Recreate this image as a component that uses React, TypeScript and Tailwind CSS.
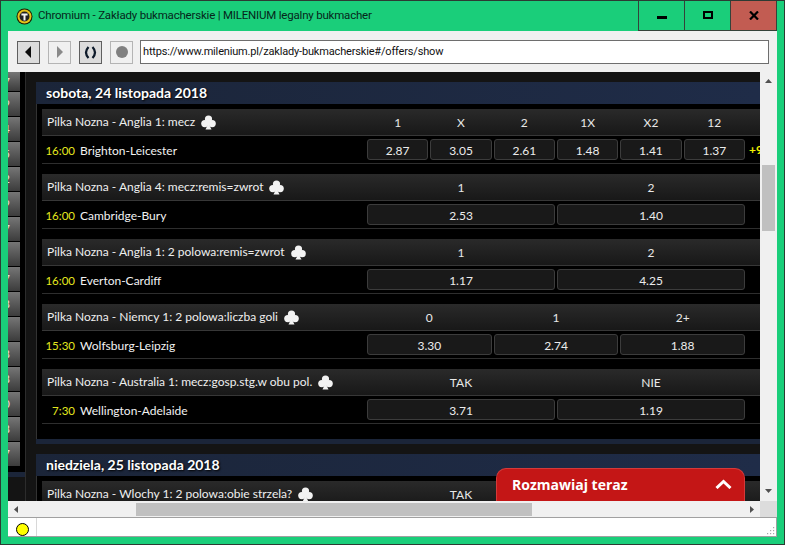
import React from "react";

const FUT = "font-['Lato','Open_Sans',sans-serif]";

function Club() {
  return (
    <svg width="15" height="15" viewBox="0 0 15 15" className="shrink-0" fill="#f2f2f2">
      <circle cx="7.5" cy="4" r="3.6" />
      <circle cx="3.8" cy="8.6" r="3.6" />
      <circle cx="11.2" cy="8.6" r="3.6" />
      <path d="M6.7 7 H8.3 Q8.3 12 10.5 14.5 H4.5 Q6.7 12 6.7 7 Z" />
    </svg>
  );
}

function Odd({ v }: { v: string }) {
  return (
    <div className="flex-1 min-w-0 h-[21px] pt-[2px] flex items-center justify-center rounded-[3px] border border-[#3c3c3c] bg-[#191919] text-[12px] text-[#ececec]">
      {v}
    </div>
  );
}

type G = { title: string; time: string; teams: string; cols: string[]; odds: string[]; more?: boolean };

function Group({ g }: { g: G }) {
  return (
    <div className="mb-[10px] w-[760px]">
      <div className="h-[27px] flex items-center border-b border-[#373737] bg-gradient-to-b from-[#2a2a2a] to-[#181818]">
        <div className="w-[325px] shrink-0 pl-[5px] flex items-center gap-[6px] text-[12px] text-[#efefef] whitespace-nowrap">
          <span>{g.title}</span>
          <Club />
        </div>
        <div className="w-[378px] shrink-0 pt-[1px] flex gap-[2px] text-[12px] text-[#e8e8e8]">
          {g.cols.map((c, i) => (
            <div key={i} className="flex-1 min-w-0 text-center">{c}</div>
          ))}
        </div>
      </div>
      <div className="h-[28px] flex items-center border-b border-[#2e2e2e] bg-black">
        <div className="w-[325px] shrink-0 pt-[2px] flex items-center whitespace-nowrap">
          <span className="w-[33px] text-right text-[11.5px] text-[#e4e81e]">{g.time}</span>
          <span className="ml-[5px] text-[12px] text-[#f2f2f2]">{g.teams}</span>
        </div>
        <div className="w-[378px] shrink-0 flex gap-[2px]">
          {g.odds.map((o, i) => (
            <Odd key={i} v={o} />
          ))}
        </div>
        {g.more && <span className="ml-[4px] pt-[1px] text-[12px] font-bold text-[#f0f000] whitespace-nowrap">+97</span>}
      </div>
    </div>
  );
}

const groups: G[] = [
  { title: "Pilka Nozna - Anglia 1: mecz", time: "16:00", teams: "Brighton-Leicester", cols: ["1", "X", "2", "1X", "X2", "12"], odds: ["2.87", "3.05", "2.61", "1.48", "1.41", "1.37"], more: true },
  { title: "Pilka Nozna - Anglia 4: mecz:remis=zwrot", time: "16:00", teams: "Cambridge-Bury", cols: ["1", "2"], odds: ["2.53", "1.40"] },
  { title: "Pilka Nozna - Anglia 1: 2 polowa:remis=zwrot", time: "16:00", teams: "Everton-Cardiff", cols: ["1", "2"], odds: ["1.17", "4.25"] },
  { title: "Pilka Nozna - Niemcy 1: 2 polowa:liczba goli", time: "15:30", teams: "Wolfsburg-Leipzig", cols: ["0", "1", "2+"], odds: ["3.30", "2.74", "1.88"] },
  { title: "Pilka Nozna - Australia 1: mecz:gosp.stg.w obu pol.", time: "7:30", teams: "Wellington-Adelaide", cols: ["TAK", "NIE"], odds: ["3.71", "1.19"] },
];

const last: G = { title: "Pilka Nozna - Wlochy 1: 2 polowa:obie strzela?", time: "20:30", teams: "", cols: ["TAK", "NIE"], odds: ["1.80", "1.90"] };

const side = ["7", "9", "4", "5", "2", "9", "7", "", "7", "8", "", "8", "8", "0", "8", "7"];

function DateBar({ text }: { text: string }) {
  return (
    <div className="h-[22px] flex items-center pl-[10px] pb-[2px] bg-gradient-to-r from-[#1b2539] to-[#1f2c48] text-[14px] font-bold text-white [text-shadow:1px_1px_2px_#000] whitespace-nowrap">
      {text}
    </div>
  );
}

function NavBtn({ active, children }: { active?: boolean; children: React.ReactNode }) {
  return (
    <div className={active
      ? "w-[23px] h-[23px] flex items-center justify-center border border-[#5f5f5f] bg-[#dcdcdc]"
      : "w-[23px] h-[23px] flex items-center justify-center border border-[#b4b4b4] bg-[#f0f0f0]"}>
      {children}
    </div>
  );
}

export default function App() {
  return (
    <div className="w-[785px] h-[545px] flex flex-col overflow-hidden relative bg-[#1ace7a] border border-[#2d3a33] font-['Liberation_Sans',sans-serif]">
      {/* title bar */}
      <div className="h-[30px] shrink-0 flex items-stretch">
        <div className="flex-1 flex items-center pl-[15px] gap-[5px]">
          <svg width="17" height="17" viewBox="0 0 17 17">
            <circle cx="8.5" cy="8.5" r="8" fill="#1a1a00" />
            <circle cx="8.5" cy="8.5" r="7" fill="#e5c21a" />
            <circle cx="8.5" cy="8.5" r="5" fill="#222" />
            <path d="M5.4 5.4 H11.6 V7.4 H9.5 V12.6 H7.5 V7.4 H5.4 Z" fill="#f4f4f4" />
          </svg>
          <span className="text-[11.5px] tracking-[-0.2px] text-[#06261a] font-['Roboto',sans-serif] whitespace-nowrap">
            Chromium - Zakłady bukmacherskie | MILENIUM legalny bukmacher
          </span>
        </div>
        <div className="w-[47px] flex items-center justify-center border-x border-b border-[#34423a]">
          <div className="w-[10px] h-[3px] bg-black mt-[3px]" />
        </div>
        <div className="w-[46px] flex items-center justify-center border-r border-b border-[#34423a]">
          <div className="w-[10px] h-[8px] border-2 border-black mb-[2px]" />
        </div>
        <div className="w-[46px] flex items-center justify-center border-r border-b border-[#34423a] bg-[#c25c52]">
          <svg width="10" height="9" viewBox="0 0 10 9" className="mb-[1px]">
            <path d="M1 0.5 L9 8.5 M9 0.5 L1 8.5" stroke="#000" strokeWidth="2.2" />
          </svg>
        </div>
        <div className="w-[7px]" />
      </div>

      {/* client */}
      <div className="flex-1 min-h-0 mx-[7px] mb-[7px] flex flex-col">
        {/* toolbar */}
        <div className="h-[41px] shrink-0 bg-[#f0f0f0] flex items-center pl-[9px] pr-[8px]">
          <div className="flex gap-[8px] mt-[1px]">
            <NavBtn active>
              <svg width="7" height="12" viewBox="0 0 7 12"><path d="M6 0 V12 L0 6 Z" fill="#0d0d0d" /></svg>
            </NavBtn>
            <NavBtn>
              <svg width="7" height="12" viewBox="0 0 7 12"><path d="M1 0 V12 L7 6 Z" fill="#8a8a8a" /></svg>
            </NavBtn>
            <NavBtn active>
              <svg width="13" height="13" viewBox="0 0 13 13" fill="none" stroke="#0d1a2a" strokeWidth="2.2">
                <path d="M4.5 1 Q-0.5 6.5 4.5 12" />
                <path d="M8.5 1 Q13.5 6.5 8.5 12" />
              </svg>
            </NavBtn>
            <NavBtn>
              <div className="w-[12px] h-[12px] rounded-full bg-[#808080]" />
            </NavBtn>
          </div>
          <div className="ml-[7px] flex-1 h-[24px] mt-[1px] border border-[#6e6e6e] bg-white flex items-center pl-[2px] text-[11px] tracking-[-0.17px] text-[#111] font-['Roboto',sans-serif] whitespace-nowrap">
            https://www.milenium.pl/zaklady-bukmacherskie#/offers/show
          </div>
        </div>

        {/* viewport + vertical scrollbar */}
        <div className="h-[429px] shrink-0 flex relative">
          <div className={`w-[752px] shrink-0 flex overflow-hidden bg-[#141414] ${FUT}`}>
            {/* left rail */}
            <div className="w-[18px] shrink-0 flex flex-col bg-black border-r border-[#2c2c2c]">
              <div className="h-[394px] shrink-0 w-[12px] flex flex-col">
                {side.map((s, i) => (
                  <div
                    key={i}
                    className={`${i === 0 ? "h-[20px]" : "h-[25px]"} shrink-0 border-b border-black overflow-hidden flex items-center bg-gradient-to-b from-[#767676] to-[#3c3c3c] text-[12px] text-[#f0e0d0]`}
                  >
                    <span className="w-[8px] -ml-[6px] shrink-0 text-right">{s}</span>
                  </div>
                ))}
              </div>
              <div className="flex-1" />
              <div className="h-[5px] bg-[#1b2539]" />
              <div className="h-[24px] bg-[#141414]" />
            </div>
            {/* main */}
            <div className="flex-1 min-w-0 pt-[10px] pl-[10px] overflow-hidden">
              <DateBar text="sobota, 24 listopada 2018" />
              <div className="bg-black border-l border-[#333] pl-[5px] pt-[5px] pb-[5px]">
                {groups.map((g, i) => (
                  <Group key={i} g={g} />
                ))}
              </div>
              <div className="h-[5px] bg-[#1b2539] mb-[10px]" />
              <DateBar text="niedziela, 25 listopada 2018" />
              <div className="bg-black border-l border-[#333] pl-[5px] pt-[5px]">
                <Group g={last} />
              </div>
            </div>
          </div>
          <div className="flex-1 bg-[#f0f0f0] flex flex-col items-center">
            <svg width="7" height="4" viewBox="0 0 7 4" className="mt-[7px]"><path d="M3.5 0 L7 4 H0 Z" fill="#505050" /></svg>
            <div className="w-[13px] h-[66px] mt-[82px] bg-[#c0c0c0]" />
            <div className="flex-1" />
            <svg width="7" height="4" viewBox="0 0 7 4" className="mb-[8px]"><path d="M3.5 4 L7 0 H0 Z" fill="#505050" /></svg>
          </div>

          {/* chat */}
          <div className="absolute left-[488px] top-[396px] w-[249px] h-[33px] pb-[2px] rounded-t-[10px] border-t border-x border-[#d43a3a] bg-[#c41616] flex items-center justify-between pl-[15px] pr-[12px] font-['Open_Sans',sans-serif] text-[14px] font-bold text-white">
            <span>Rozmawiaj teraz</span>
            <svg width="17" height="10" viewBox="0 0 17 10" fill="none" stroke="#fff" strokeWidth="3"><path d="M1.5 9 L8.5 2.5 L15.5 9" /></svg>
          </div>
        </div>

        {/* horizontal scrollbar */}
        <div className="h-[16px] shrink-0 flex bg-[#f0f0f0]">
          <div className="w-[752px] shrink-0 flex items-center">
            <svg width="4" height="7" viewBox="0 0 4 7" className="ml-[6px]"><path d="M0 3.5 L4 0 V7 Z" fill="#505050" /></svg>
            <div className="ml-[118px] w-[396px] h-[13px] bg-[#c0c0c0]" />
            <div className="flex-1" />
            <svg width="4" height="7" viewBox="0 0 4 7" className="mr-[6px]"><path d="M4 3.5 L0 0 V7 Z" fill="#505050" /></svg>
          </div>
          <div className="flex-1 bg-[#dcdcdc]" />
        </div>

        {/* status bar */}
        <div className="flex-1 min-h-0 border-y border-r border-[#a0a0a0] bg-white flex items-stretch">
          <div className="w-[29px] flex items-end justify-center border-r border-[#d8d8d8]">
            <div className="w-[13px] h-[13px] rounded-full bg-[#ffff00] border border-black" />
          </div>
          <div className="flex-1" />
          <svg width="9" height="9" viewBox="0 0 9 9" className="self-end mr-[1px] mb-[1px]" fill="#a8a8a8">
            <rect x="7" y="1" width="1.2" height="1.2" />
            <rect x="4" y="4" width="1.2" height="1.2" /><rect x="7" y="4" width="1.2" height="1.2" />
            <rect x="1" y="7" width="1.2" height="1.2" /><rect x="4" y="7" width="1.2" height="1.2" /><rect x="7" y="7" width="1.2" height="1.2" />
          </svg>
        </div>
      </div>
    </div>
  );
}
